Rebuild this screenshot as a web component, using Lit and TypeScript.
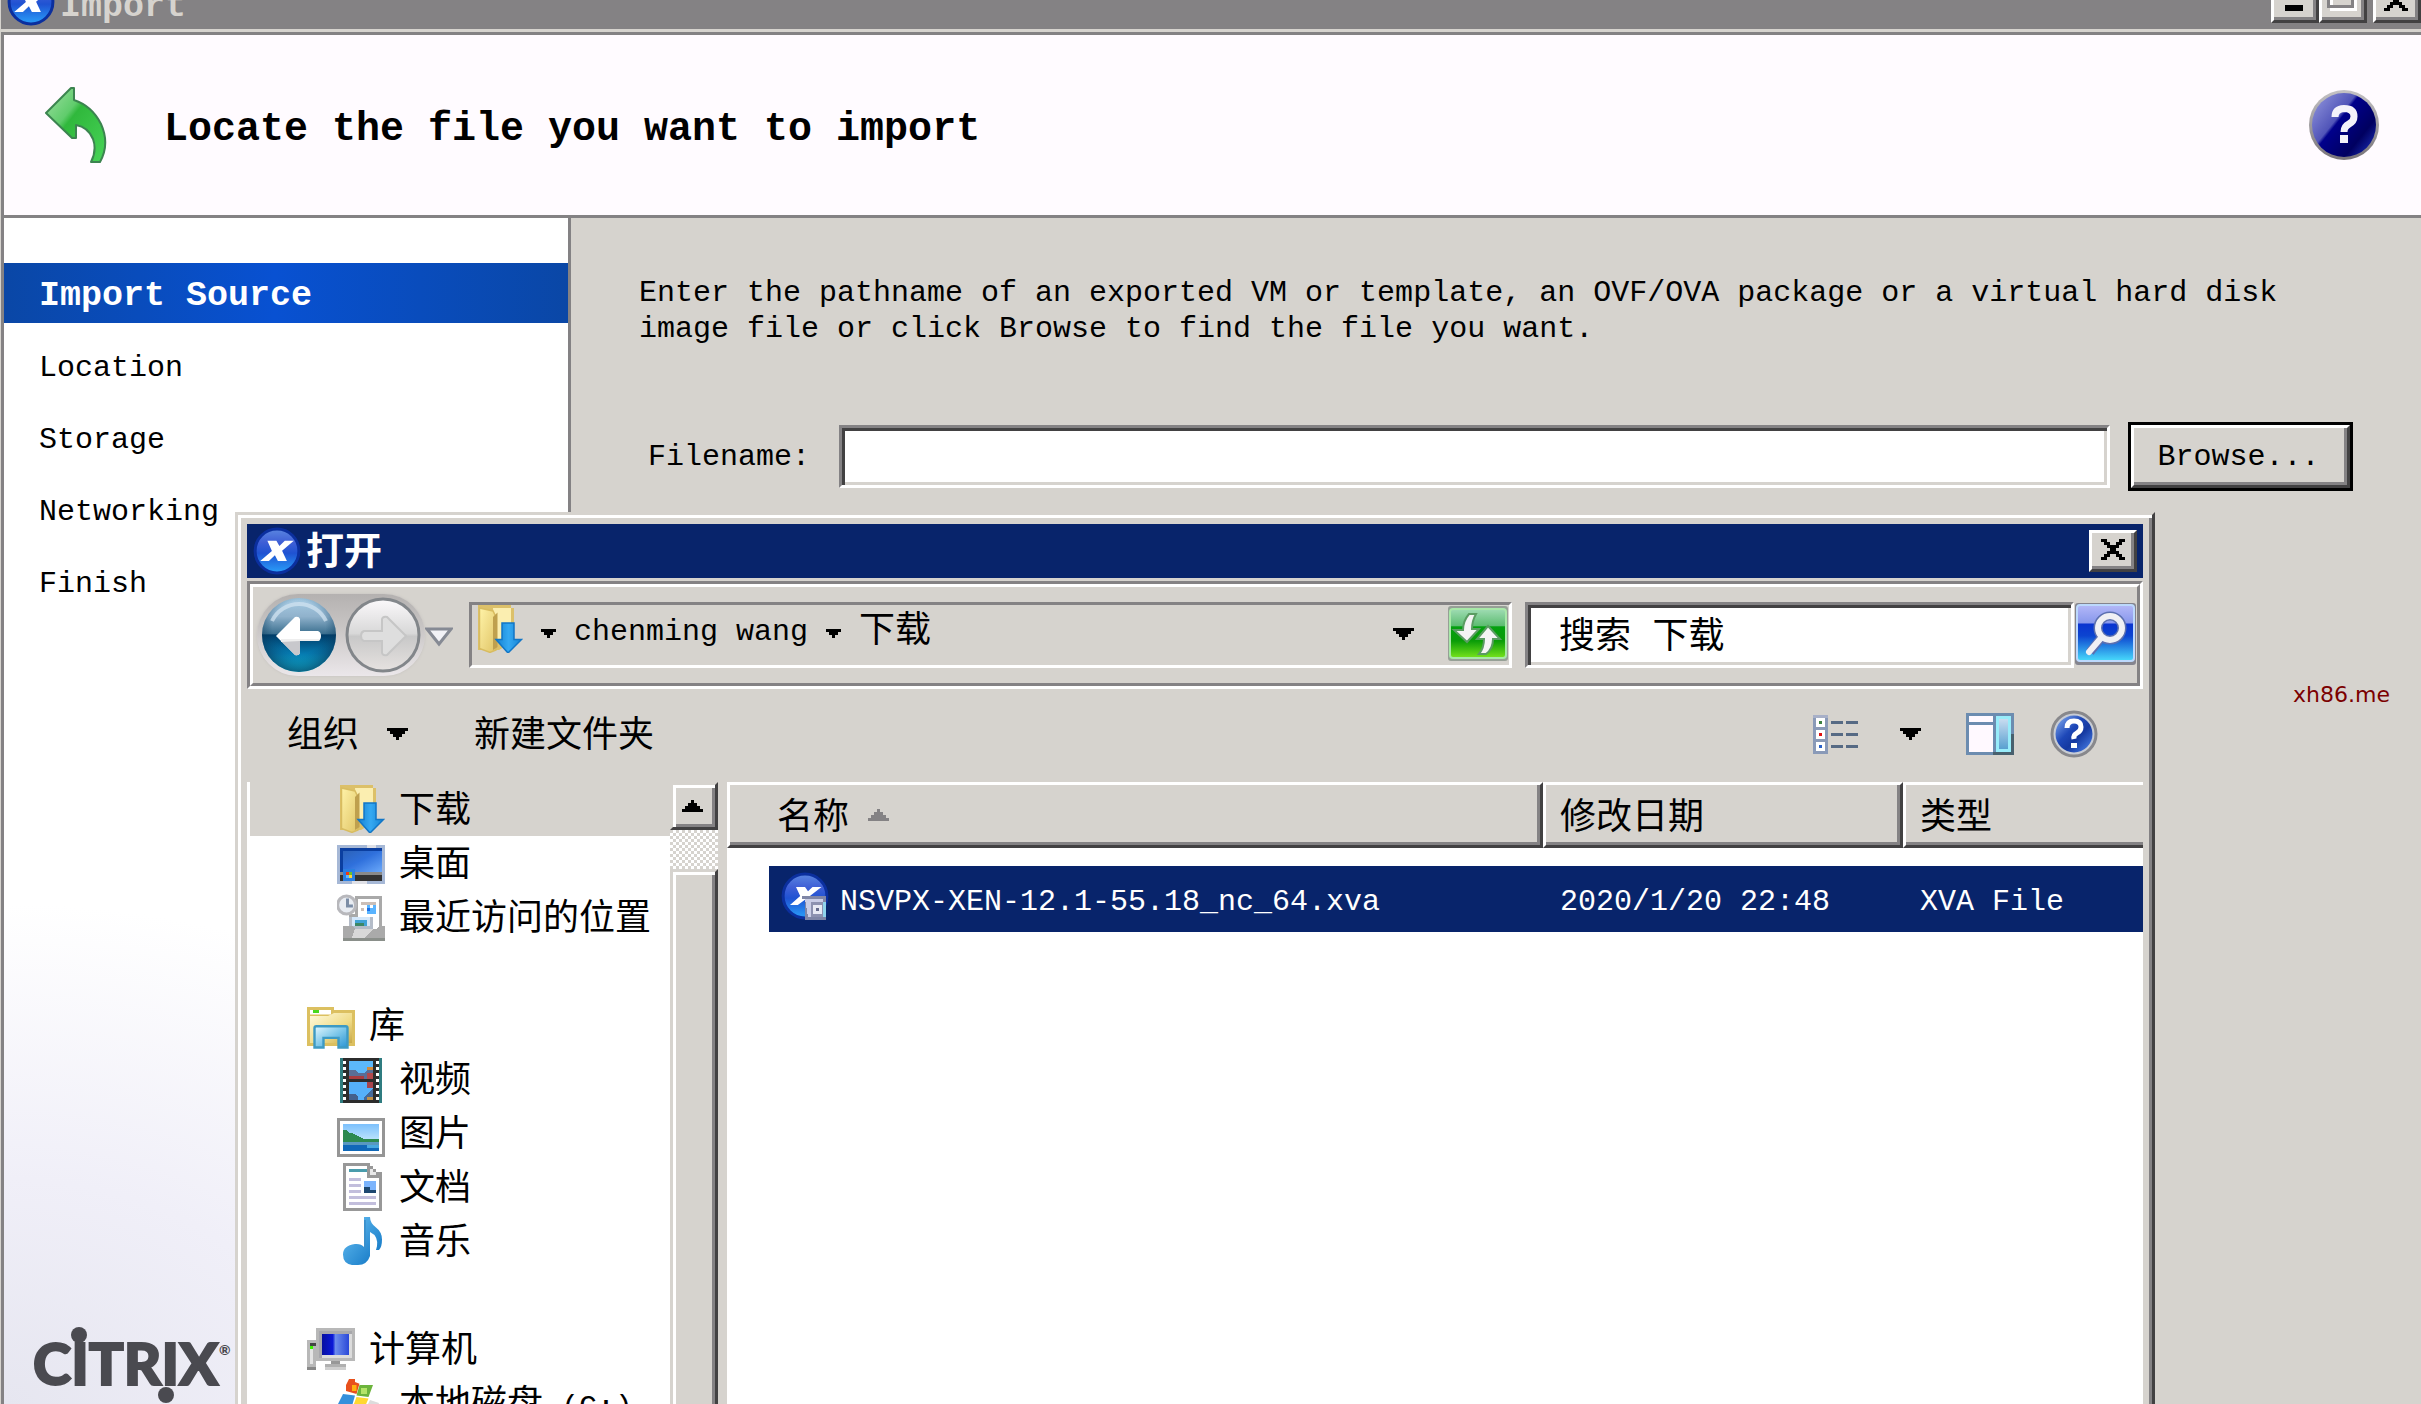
import { LitElement, html, css, svg } from "lit";
import { customElement, property } from "lit/decorators.js";

const icons: Record<string, unknown> = {
  app: svg`
    <defs><linearGradient id="a" x1="0" y1="0" x2="0" y2="1"><stop offset="0" stop-color="#5a86e0"/><stop offset=".3" stop-color="#3f5fd6"/><stop offset=".55" stop-color="#1f52d2"/><stop offset="1" stop-color="#2aa0fa"/></linearGradient></defs>
    <circle cx="8" cy="8" r="7.3" fill="url(#a)" stroke="#0b2f9e" stroke-width="1"/>
    <path d="M4.8 4.6h3l1 1.7 1.8-1.7h3L9.7 7.9l1.6 3.4h-3L7.3 9.4l-2 1.9H2.4L6.3 8z" fill="#fff"/>`,
  appfile: svg`
    <defs><linearGradient id="b" x1="0" y1="0" x2="0" y2="1"><stop offset="0" stop-color="#5a86e0"/><stop offset=".3" stop-color="#3f5fd6"/><stop offset=".55" stop-color="#1f52d2"/><stop offset="1" stop-color="#2aa0fa"/></linearGradient></defs>
    <circle cx="8" cy="8" r="7.3" fill="url(#b)" stroke="#0b2f9e" stroke-width="1"/>
    <path d="M5 5h3l1 1.4L10.500 5h3L9 8.500 5.600 11H3l3.400-3z" fill="#fff"/>
    <g shape-rendering="crispEdges"><path d="M7 8h8v8H8V9H7z" fill="#7f86a6"/><path d="M8 9h6v6H9z" fill="#c9cde6"/><path d="M10 10h4v5h-4z" fill="#8d92b0"/><path d="M10.500 11h3v3h-3z" fill="#e8eaf4"/><path d="M11.500 12h1v1h-1z" fill="#666c8c"/><path d="M14 10h1v5h-1z" fill="#8fd4ec"/></g>`,
  downloads: svg`
    <defs><linearGradient id="c" x1="0" y1="0" x2="1" y2="1"><stop offset="0" stop-color="#fff3a8"/><stop offset="1" stop-color="#e0c466"/></linearGradient><linearGradient id="d" x1="0" y1="0" x2="1" y2="0"><stop offset="0" stop-color="#1582d2"/><stop offset=".5" stop-color="#35a9f2"/><stop offset="1" stop-color="#1582d2"/></linearGradient></defs>
    <path d="M1 0h11v1h1v11l-5 3H1z" fill="#dcc069"/><path d="M6 1h6v11H7z" fill="#fbeeb0"/>
    <path d="M1.500 1L6 2l1 2v11l-2 .8L1.500 14.500z" fill="url(#c)" stroke="#d8bc60" stroke-width=".5"/><path d="M6 4l1.500-1.500V14L6 15z" fill="#bfa04e"/>
    <path d="M9 6h4v5.500h2.500L11 16l-4-4.500h2z" fill="url(#d)" stroke="#1276c6" stroke-width=".5"/>`,
  desktop: svg`
    <defs><linearGradient id="e" x1="0" y1="0" x2="1" y2="1"><stop offset="0" stop-color="#2c62b8"/><stop offset=".45" stop-color="#2f70dc"/><stop offset="1" stop-color="#6aa8fa"/></linearGradient></defs>
    <g shape-rendering="crispEdges"><path d="M0 2h16v13H0z" fill="#a6b8d6"/><path d="M10 2h3v1h-3zM5 14h5v1H5z" fill="#dfe0e6"/><path d="M1 3h14v9H1z" fill="#0b3fa0"/><path d="M2 4h13v7H2z" fill="url(#e)"/><path d="M1 11h14v1H1z" fill="#8a8a8a"/><path d="M1 12h14v2H1z" fill="#333"/><path d="M2 10h4v4H2z" fill="#2b7fe0"/><path d="M3 11h1v1H3z" fill="#f23a12"/><path d="M4 11h1v1H4z" fill="#6cc22a"/><path d="M3 12h1v1H3z" fill="#5ab8ff"/><path d="M4 12h1v1H4z" fill="#ffd83a"/></g>`,
  recent: svg`
    <g shape-rendering="crispEdges"><path d="M6 1h9v11H4V7h2z" fill="#a9a9a9"/><path d="M7 2h7v10H5V8h2z" fill="#fff"/><path d="M8 3h5v1H8z" fill="#cbbfb8"/><path d="M10 4h3v3h-3z" fill="#5ab4ff"/><path d="M11 4h1v1h-1z" fill="#fff"/><path d="M10 5h1v1h-1z" fill="#1a6fe8"/><path d="M8 5h1v1H8z" fill="#cbbfb8"/><path d="M4 8h8v4H4z" fill="#b4bcc8"/><path d="M5 8h6v3H5z" fill="#d3e7fa"/><path d="M6 9h4v2H6z" fill="#3fa2d6"/><path d="M6 10h3v1H6z" fill="#3c8766"/><path d="M2 11h3l1 1h7l1-1h2v5H2z" fill="#aaa"/><path d="M6 12h6l-3 3H5z" fill="#d8d8d8"/><path d="M2 15h14v1H2z" fill="#8a8f8a"/></g>
    <circle cx="3.200" cy="4" r="3" fill="#e8ecf2" stroke="#b8b8bc"/><path d="M3.500 1.800V4.300h1.800" fill="none" stroke="#7b8da6"/>`,
  library: svg`
    <defs><linearGradient id="f" x1="0" y1="0" x2="1" y2="1"><stop offset="0" stop-color="#fffbe0"/><stop offset=".6" stop-color="#f0dc88"/><stop offset="1" stop-color="#c8a848"/></linearGradient><linearGradient id="g" x1="0" y1="0" x2="1" y2="1"><stop offset="0" stop-color="#e4f8ff"/><stop offset=".5" stop-color="#7fc8ea"/><stop offset="1" stop-color="#2a94d4"/></linearGradient></defs>
    <path d="M0 2h9v1h7v12H0z" fill="#dcc060"/><path d="M1 3h7v1.500H1z" fill="#fff"/><path d="M2 3h2v1H2z" fill="#4ad820"/><path d="M1 5h6l2-1h6v10H1z" fill="url(#f)"/>
    <path d="M2.500 9q0-.6.600-.6h9.800q.6 0 .6.600v6.500H10.500v-3.200H5.500v3.200h-3z" fill="url(#g)" stroke="#3d9ac4" stroke-width=".8"/>`,
  video: svg`
    <g shape-rendering="crispEdges"><path d="M1 1h14v15H1z" fill="#2f7c80"/><path d="M2 1h12v15H2z" fill="#2c2c2c"/><path d="M4 2h8v6H4z" fill="#5cb8fa"/><path d="M4 9h8v6H4z" fill="#55b0fa"/><path d="M4 5h2l1 1h2l2-2h1v4H4z" fill="#5a6e96"/><path d="M4 7h5v1H4z" fill="#a83c40"/><path d="M10 4h2v1h-2z" fill="#d08a3c"/><path d="M10 6h2v2h-2z" fill="#b2484c"/><path d="M10 9h2v2h-2z" fill="#a8444c"/><path d="M4 13h2l1 1v1H4z" fill="#44618c"/><path d="M9 14l3-3v4H9z" fill="#456a9a"/><path d="M10 14h2v1h-2z" fill="#c09048"/>
    <path d="M2 2h1v1H2zM2 4h1v1H2zM2 6h1v1H2zM2 8h1v1H2zM2 10h1v1H2zM2 12h1v1H2zM2 14h1v1H2zM13 2h1v1h-1zM13 4h1v1h-1zM13 6h1v1h-1zM13 8h1v1h-1zM13 10h1v1h-1zM13 12h1v1h-1zM13 14h1v1h-1z" fill="#fff"/></g>`,
  picture: svg`
    <defs><linearGradient id="h" x1="0" y1="0" x2="0" y2="1"><stop offset="0" stop-color="#7cc0fc"/><stop offset="1" stop-color="#e8fcfc"/></linearGradient></defs>
    <g shape-rendering="crispEdges"><path d="M0 3h16v13H0z" fill="#959595"/><path d="M1 4h14v11H1z" fill="#fff"/><path d="M2 5h12v9H2z" fill="url(#h)"/><path d="M2 7h1l1 1h1l2 1 2 1h5v1H2z" fill="#2c8a50"/><path d="M2 11h12v1H2z" fill="#5898c0"/><path d="M2 12h12v2H2z" fill="#1068b8"/><path d="M10 12h4v1h-4z" fill="#48a8e0"/></g>`,
  document: svg`
    <g shape-rendering="crispEdges"><path d="M2 0h9v1h1v1h1v1h2v13H2z" fill="#989898"/><path d="M3 1h7v4h4v10H3z" fill="#fff"/><path d="M11 2h1v1h1v1h-2z" fill="#e8e8e8"/><path d="M4 2h6v1H4z" fill="#4a9cac"/><path d="M4 5h4v1H4zM4 7h4v1H4zM4 9h4v1H4zM4 11h9v1H4zM4 13h9v1H4z" fill="#c2bedc"/><path d="M9 6h4v4H9z" fill="#7cb4fc"/><path d="M9 8h2v1h2v1H9z" fill="#1e4870"/></g>`,
  music: svg`
    <defs><linearGradient id="i" x1="0" y1="0" x2="1" y2="1"><stop offset="0" stop-color="#6cc4f6"/><stop offset="1" stop-color="#0a70c0"/></linearGradient></defs>
    <path d="M9 0h2q0 2 2 3.500t2 4-1 3.500h-1q1-3-.5-5L11 5v8q-1 3-4 3H5q-3-.5-3-3.500T6 9q2-.2 3 1z" fill="url(#i)"/><path d="M9.300 1v9.500" stroke="#3a90cc" stroke-width=".6"/>`,
  computer: svg`
    <defs><linearGradient id="j" x1="0" y1="0" x2="1" y2="0"><stop offset="0" stop-color="#0810a0"/><stop offset=".4" stop-color="#0a18d8"/><stop offset=".5" stop-color="#6c8cec"/><stop offset="1" stop-color="#2a48d8"/></linearGradient></defs>
    <g shape-rendering="crispEdges"><path d="M3 1h13v11H3z" fill="#b8b8b8"/><path d="M4 2h11v9H4z" fill="#dcdcdc"/><path d="M4 2h11v1H5v8H4z" fill="#a8a8ac"/><path d="M5 3h9v7H5z" fill="url(#j)"/><path d="M8 12h3v1H8z" fill="#989898"/><path d="M6 13h7v1H6z" fill="#b0b0b0"/><path d="M6 14h7v1H6z" fill="#cfcfcf"/><path d="M0 5h3v10H0z" fill="#b8b8b8"/><path d="M1 8h1v5H1z" fill="#e4e4e4"/><path d="M1 6h2v1H1z" fill="#444"/><path d="M1 7h1v1H1z" fill="#3df000"/><path d="M0 14h3v1H0z" fill="#888"/></g>`,
  disk: svg`
    <path d="M3 2l1-2h2v1l1.500.6L6.500 5 3 4z" fill="#e8501c"/><path d="M5 2h1.500v2H5z" fill="#ffb010"/><path d="M7.500 2H12l-1.500 4-4-.5z" fill="#6cb43c"/><path d="M8 3h2v2H8z" fill="#b4e468"/><path d="M2 5l4 .5L5 9H0z" fill="#3490dc"/><path d="M6.500 6l4 .5L9 10H5z" fill="#ffd830"/><path d="M11 7l3 1-1 3H9z" fill="#dcdcdc"/>`,
};

@customElement("pixel-icon")
export class PixelIcon extends LitElement {
  static styles = css`
    :host { display: block; flex: none; width: 48px; height: 48px; }
    svg { display: block; width: 100%; height: 100%; }
  `;
  @property() name = "app";
  render() {
    return html`<svg viewBox="0 0 16 16" aria-hidden="true">${icons[this.name]}</svg>`;
  }
}

interface Place { label: string; latin?: string; icon: string; level: number; selected?: boolean; gap?: boolean; }

const places: Place[] = [
  { label: "下载", icon: "downloads", level: 2, selected: true },
  { label: "桌面", icon: "desktop", level: 2 },
  { label: "最近访问的位置", icon: "recent", level: 2 },
  { label: "库", icon: "library", level: 1, gap: true },
  { label: "视频", icon: "video", level: 2 },
  { label: "图片", icon: "picture", level: 2 },
  { label: "文档", icon: "document", level: 2 },
  { label: "音乐", icon: "music", level: 2 },
  { label: "计算机", icon: "computer", level: 1, gap: true },
  { label: "本地磁盘", latin: " (C:)", icon: "disk", level: 2 },
];

const base = css`
  * { box-sizing: border-box; }
  button, input { font: inherit; color: inherit; margin: 0; padding: 0; border: 0; border-radius: 0; background: none; outline: 0; appearance: none; }
  button svg { display: block; }
  .sunken { border: 3px solid; border-color: #848284 #fff #fff #848284; background: #fff; box-shadow: inset 3px 3px #424142, inset -3px -3px #d6d3ce; }
  .raised { border: 3px solid; border-color: #fff #424142 #424142 #fff; background: #d6d3ce; box-shadow: inset -3px -3px #848284; }
  .tri { display: block; flex: none; fill: #000; }
`;

const down5 = html`<svg class="tri" width="15" height="9" viewBox="0 0 5 3" shape-rendering="crispEdges" aria-hidden="true"><path d="M0 0h5v1H4v1H3v1H2V2H1V1H0z"/></svg>`;
const down7 = html`<svg class="tri" width="21" height="12" viewBox="0 0 7 4" shape-rendering="crispEdges" aria-hidden="true"><path d="M0 0h7v1H6v1H5v1H4v1H3V3H2V2H1V1H0z"/></svg>`;
const up7 = html`<svg class="tri" width="21" height="12" viewBox="0 0 7 4" shape-rendering="crispEdges" aria-hidden="true"><path d="M3 0h1v1h1v1h1v1h1v1H0V3h1V2h1V1h1z"/></svg>`;
const cross = html`<svg width="24" height="21" viewBox="0 0 8 7" shape-rendering="crispEdges" aria-hidden="true"><path d="M0 0h2v1h1v1h2V1h1V0h2v1H7v1H6v1H5v1h1v1h1v1h1v1H6V6H5V5H3v1H2v1H0V6h1V5h1V4h1V3H2V2H1V1H0z"/></svg>`;

@customElement("open-dialog")
export class OpenDialog extends LitElement {
  static styles = [base, css`
    :host { display: flex; flex-direction: column; background: #d6d3ce; border: 3px solid; border-bottom: 0; border-color: #d6d3ce #424142 #424142 #d6d3ce; box-shadow: inset 3px 3px #fff, inset -3px 0 #848284; padding: 9px 9px 0; font-family: "Liberation Mono", "Noto Sans CJK SC", monospace; font-size: 30px; line-height: 36px; color: #000; overflow: hidden; }
    .cjk { font-size: 36px; line-height: 54px; }
    .low { display: block; padding-top: 8px; }
    .title { display: flex; align-items: center; gap: 5px; height: 54px; flex: none; background: #08246b; color: #fff; padding: 0 6px; }
    .title h2 { flex: 1; margin: 0; padding-top: 6px; font-size: 38px; line-height: 54px; font-weight: 700; }
    .close { display: grid; place-items: start center; width: 48px; height: 42px; padding-top: 6px; }
    .frame { flex: none; margin-top: 3px; border: 3px solid; border-color: #848284 #fff #fff #848284; }
    .bar { display: flex; align-items: center; height: 102px; border: 3px solid; border-color: #fff #848284 #848284 #fff; padding-left: 4px; }
    .travel { display: flex; gap: 8px; padding: 3px 4px; border-radius: 41px; background: linear-gradient(#b4b1b0, #c8c5c4 40%, #ebe7ea); box-shadow: 0 0 3px #c4c1be; }
    .travel button, .travel svg { display: block; width: 76px; height: 76px; }
    .history { width: 28px; margin: 4px 16px 0 0; }
    .address { display: flex; flex: 1; align-items: flex-start; height: 66px; border: 3px solid; border-color: #848284 #fff #fff #848284; padding-left: 3px; }
    .crumbs { display: flex; flex: 1; align-items: center; height: 48px; gap: 18px; }
    .crumbs .tri { margin-top: 9px; }
    .crumbs .latin { padding-top: 6px; }
    .crumbs .drop { margin-left: auto; margin-right: 33px; }
    .search { width: 549px; height: 66px; margin-left: 13px; padding: 0 9px 5px 31px; font-size: 36px; }
    .go { margin: 0 1px 3px; }
    .tools { display: flex; align-items: center; flex: none; height: 93px; padding: 0 45px 3px 40px; }
    .organize { display: flex; align-items: center; gap: 28px; margin-right: 66px; }
    .right { display: flex; align-items: center; margin-left: auto; }
    .right .tri { margin: 0 45px 0 42px; }
    .right .help { margin-left: 36px; }
    .content { display: flex; flex: 1; min-height: 0; }
    .tree { width: 423px; background: #fff; padding-left: 3px; overflow: hidden; }
    .tree ul { list-style: none; margin: 0; padding: 0; }
    .tree li { display: flex; align-items: center; gap: 14px; height: 54px; white-space: pre; }
    .tree .l1 { padding-left: 57px; }
    .tree .l2 { padding-left: 87px; }
    .tree .gap { margin-top: 54px; }
    .tree .selected { background: #d6d3ce; }
    .latin { font-size: 30px; }
    .scroll { display: flex; flex-direction: column; width: 48px; margin-right: 9px; background: conic-gradient(#fff 25%, #d6d3ce 0 50%, #fff 0 75%, #d6d3ce 0) 0 0 / 6px 6px; }
    .scroll button, .thumb { background: #d6d3ce; border: 3px solid; border-color: #d6d3ce #424142 #424142 #d6d3ce; box-shadow: inset 3px 3px #fff, inset -3px -3px #848284; }
    .scroll button { display: grid; place-items: center; height: 48px; padding-right: 3px; }
    .thumb { flex: 1; margin-top: 39px; border-bottom: 0; box-shadow: inset 3px 3px #fff, inset -3px 0 #848284; }
    .files { flex: 1; background: #fff; overflow: hidden; }
    table { width: 100%; border-collapse: separate; border-spacing: 0; table-layout: fixed; }
    .c1 { width: 816px; }
    .c2 { width: 360px; }
    th { height: 66px; padding: 0 0 0 14px; text-align: left; font-weight: 400; background: #d6d3ce; border: 3px solid; border-color: #fff #424142 #424142 #fff; box-shadow: inset -3px -3px #848284; }
    th .low { height: 60px; }
    th:first-child { padding-left: 47px; }
    th:last-child { border-right: 0; box-shadow: inset 0 -3px #848284; }
    .sort { display: flex; align-items: center; gap: 19px; height: 60px; }
    .sort .tri { fill: #848284; }
    td { padding: 18px 0 0; color: #fff; }
    td:first-child { padding-left: 42px; }
    .cell { display: flex; align-items: center; height: 66px; background: #08246b; padding: 5px 0 0 17px; white-space: nowrap; }
    .name { padding: 0 0 0 12px; gap: 11px; }
    .name pixel-icon { margin-bottom: 6px; }
    .name .label { padding-top: 5px; }
  `];

  render() {
    return html`
      <header class="title">
        <pixel-icon name="app"></pixel-icon>
        <h2>打开</h2>
        <button class="close raised" aria-label="关闭">${cross}</button>
      </header>
      <div class="frame"><div class="bar">
        <div class="travel">
          <button aria-label="后退">
            <svg viewBox="0 0 76 76" aria-hidden="true">
              <defs>
                <linearGradient id="k" x1="0" y1="0" x2="0" y2="1"><stop offset="0" stop-color="#a8cce4"/><stop offset=".25" stop-color="#90b2cc"/><stop offset=".48" stop-color="#3c7090"/><stop offset=".5" stop-color="#003c68"/><stop offset=".75" stop-color="#067ab0"/><stop offset="1" stop-color="#10d8f8"/></linearGradient>
                <radialGradient id="k2" cx=".5" cy=".4" r=".6"><stop offset=".6" stop-color="#0a4468" stop-opacity="0"/><stop offset="1" stop-color="#0a3050" stop-opacity=".7"/></radialGradient>
              </defs>
              <circle cx="38" cy="38" r="37" fill="url(#k)"/><circle cx="38" cy="38" r="37" fill="url(#k2)"/>
              <path d="M11 24a30 30 0 0 1 54 0" fill="none" stroke="#d4e6f2" stroke-width="4" opacity=".7"/>
              <path d="M15 39L34 20q4-1 5 2v12h18q3 1 3 5t-3 5H39v12q-1 3-5 2z" fill="#fff"/><path d="M20 44l14 14q4 1 5-2V44z" fill="#c8c8cc"/><path d="M20 42h39v1q-1 1-2 1H39l-19 1z" fill="#eee"/>
            </svg>
          </button>
          <button aria-label="前进" disabled>
            <svg viewBox="0 0 76 76" aria-hidden="true">
              <defs><linearGradient id="m" x1="0" y1="0" x2="0" y2="1"><stop offset="0" stop-color="#fbf9fb"/><stop offset=".48" stop-color="#d8d8d8"/><stop offset=".52" stop-color="#c8c8c8"/><stop offset="1" stop-color="#e6e2e0"/></linearGradient></defs>
              <circle cx="38" cy="38" r="36" fill="url(#m)" stroke="#82868a" stroke-width="3"/>
              <path d="M61 39L42 20q-4-1-5 2v12H19q-3 1-3 5t3 5h18v12q1 3 5 2z" fill="#dedede" stroke="#c6c6c6" stroke-width="2"/>
            </svg>
          </button>
        </div>
        <button class="history" aria-label="最近的页面"><svg width="28" height="20" viewBox="0 0 28 20" aria-hidden="true"><path d="M2 2h24L14 17z" fill="#f2f2f6" stroke="#868a94" stroke-width="3"/></svg></button>
        <div class="address">
          <nav class="crumbs" aria-label="地址">
            <pixel-icon name="downloads"></pixel-icon>
            ${down5}<span class="latin">chenming wang</span>
            ${down5}<span class="cjk low">下载</span>
            <span class="drop">${down7}</span>
          </nav>
          <button aria-label="刷新">
            <svg width="62" height="57" viewBox="0 0 62 57" aria-hidden="true">
              <defs><linearGradient id="n" x1="0" y1="0" x2="0" y2="1"><stop offset="0" stop-color="#a0dcb4"/><stop offset=".35" stop-color="#5cbc70"/><stop offset=".36" stop-color="#04a010"/><stop offset=".65" stop-color="#0a9c08"/><stop offset="1" stop-color="#78e41c"/></linearGradient></defs>
              <rect x="1" y="1" width="60" height="55" rx="3" fill="#96a096"/><rect x="3" y="4" width="56" height="49" rx="3" fill="url(#n)" stroke="#a8e8a8" stroke-width="2"/>
              <g fill="#f4f4f4" stroke="#5a9c62" stroke-width="2"><path d="M22 9h7q-4 7-4 15h7L20 37 7 25h9q0-9 6-16z"/><path d="M41 21l12 13h-7q0 10-7 15h-7q5-6 5-15h-7z"/></g>
            </svg>
          </button>
        </div>
        <input class="search sunken" type="text" aria-label="搜索" .value=${"搜索 下载"} />
        <button class="go" aria-label="开始搜索">
          <svg width="61" height="63" viewBox="0 0 61 63" aria-hidden="true">
            <defs><linearGradient id="o" x1="0" y1="0" x2="0" y2="1"><stop offset="0" stop-color="#b4b8f8"/><stop offset=".32" stop-color="#8898ec"/><stop offset=".34" stop-color="#0a34d0"/><stop offset=".55" stop-color="#0c44d0"/><stop offset="1" stop-color="#48dcfc"/></linearGradient></defs>
            <rect x="0" y="1" width="61" height="62" rx="3" fill="#84848e"/><rect x="2" y="3" width="57" height="56" rx="3" fill="url(#o)" stroke="#bcd8fc" stroke-width="2"/>
            <g fill="none" stroke="#5c70b0" stroke-width="9"><circle cx="35" cy="26" r="12"/><path d="M26 36L15 50"/></g>
            <g fill="none" stroke="#f0f0f4" stroke-width="6"><circle cx="35" cy="26" r="12"/><path d="M26 36L14 50" stroke-linecap="round"/></g>
          </svg>
        </button>
      </div></div>
      <div class="tools">
        <button class="organize cjk"><span class="low">组织</span>${down7}</button>
        <button class="cjk"><span class="low">新建文件夹</span></button>
        <div class="right">
          <button aria-label="视图">
            <svg width="45" height="39" viewBox="0 0 15 13" shape-rendering="crispEdges" aria-hidden="true"><path d="M0 0h5v13H0z" fill="#8a9ab8"/><path d="M0 0h5v1H0z" fill="#a8b0c8"/><path d="M1 1h3v3H1zM1 5h3v3H1zM1 9h3v3H1z" fill="#fff"/><path d="M2 2h1v1H2z" fill="#3c8040"/><path d="M2 6h1v1H2z" fill="#e01010"/><path d="M2 10h1v1H2z" fill="#2860c8"/><path d="M6 2h4v1H6zM11 2h4v1h-4zM6 6h4v1H6zM11 6h4v1h-4zM6 10h4v1H6zM11 10h4v1h-4z" fill="#566a84"/></svg>
          </button>
          ${down7}
          <button aria-label="预览窗格">
            <svg width="48" height="42" viewBox="0 0 16 14" shape-rendering="crispEdges" aria-hidden="true"><defs><linearGradient id="p" x1="0" y1="0" x2="0" y2="1"><stop offset="0" stop-color="#c8dcf0"/><stop offset="1" stop-color="#58a0d0"/></linearGradient></defs><path d="M0 0h16v14H0z" fill="#6c8cb0"/><path d="M9 13h7v1H9zM15 7h1v7h-1z" fill="#48606e"/><path d="M1 1h8v2H1zM1 4h8v9H1z" fill="#fff9ff"/><path d="M10 1h5v12h-5z" fill="#98ecfa"/><path d="M11 2h3v10h-3z" fill="url(#p)"/></svg>
          </button>
          <button class="help" aria-label="帮助">
            <svg width="48" height="48" viewBox="0 0 48 48" aria-hidden="true">
              <defs><linearGradient id="q" x1="0" y1="0" x2="1" y2="1"><stop offset="0" stop-color="#8cb4f4"/><stop offset=".4" stop-color="#1e48b8"/><stop offset=".6" stop-color="#1438a0"/><stop offset="1" stop-color="#5088f0"/></linearGradient></defs>
              <circle cx="24" cy="24" r="22" fill="#c8ccd4" stroke="#88888c" stroke-width="3"/><circle cx="24" cy="24" r="18.500" fill="url(#q)"/>
              <path d="M17 18q0-7 7-7t7 6q0 4-4 6t-3 6" fill="none" stroke="#fff" stroke-width="5"/><path d="M21 33h6v5h-6z" fill="#fff"/>
            </svg>
          </button>
        </div>
      </div>
      <div class="content">
        <nav class="tree cjk"><ul>
          ${places.map((p) => html`<li class="l${p.level} ${p.selected ? "selected" : ""} ${p.gap ? "gap" : ""}"><pixel-icon name=${p.icon}></pixel-icon><span class="low">${p.label}${p.latin ? html`<span class="latin">${p.latin}</span>` : ""}</span></li>`)}
        </ul></nav>
        <div class="scroll"><button aria-label="向上滚动">${up7}</button><div class="thumb"></div></div>
        <div class="files">
          <table>
            <colgroup><col class="c1" /><col class="c2" /><col /></colgroup>
            <thead class="cjk"><tr><th><div class="sort"><span class="low">名称</span>${up7}</div></th><th><span class="low">修改日期</span></th><th><span class="low">类型</span></th></tr></thead>
            <tbody><tr>
              <td><div class="cell name"><pixel-icon name="appfile"></pixel-icon><span class="label">NSVPX-XEN-12.1-55.18_nc_64.xva</span></div></td>
              <td><div class="cell">2020/1/20 22:48</div></td>
              <td><div class="cell">XVA File</div></td>
            </tr></tbody>
          </table>
        </div>
      </div>`;
  }
}

@customElement("app-root")
export class AppRoot extends LitElement {
  static styles = [base, css`
    :host { display: flex; flex-direction: column; position: relative; height: 100vh; overflow: hidden; background: #d6d3ce; font-family: "Liberation Mono", "Noto Sans CJK SC", monospace; font-size: 30px; line-height: 36px; color: #000; }
    .titlebar { display: flex; align-items: flex-end; flex: none; height: 29px; margin-left: 1px; padding-left: 6px; background: #848284; color: #d6d3ce; overflow: hidden; }
    .titlebar pixel-icon { margin: 0 5px 3px 0; }
    .titlebar h1 { flex: 1; margin: 0 0 4px; font-size: 35px; line-height: 36px; font-weight: 700; }
    .controls { display: flex; flex: none; margin: 0 0 6px; }
    .controls button { display: grid; place-items: end center; width: 48px; height: 42px; padding: 0 3px 9px 0; }
    .controls .x { margin-left: 6px; }
    .window { display: flex; flex-direction: column; flex: 1; min-height: 0; margin: 3px 0 0 1px; border: solid #848284; border-width: 3px 0 0 3px; }
    .banner { display: flex; align-items: center; flex: none; height: 183px; padding: 0 41px 0 38px; background: #fffbff; border-bottom: 3px solid #848284; }
    .banner h2 { flex: 1; margin: 0 0 0 56px; padding-top: 10px; font-size: 40px; line-height: 48px; font-weight: 700; }
    .main { display: flex; flex: 1; min-height: 0; }
    .side { display: flex; flex-direction: column; justify-content: space-between; width: 567px; padding-top: 45px; border-right: 3px solid #848284; background: radial-gradient(ellipse 700px 500px at 0 100%, #e6e6f0, #f0eff8 45%, #fff); }
    .steps { list-style: none; margin: 0; padding: 0; }
    .steps a { display: flex; align-items: center; height: 72px; padding: 6px 0 0 35px; color: inherit; text-decoration: none; }
    .steps .current { height: 60px; margin-bottom: 6px; background: linear-gradient(90deg, #0a47a6, #0851d2 48%, #0a47a6); color: #fff; font-size: 35px; font-weight: 700; }
    .brand { display: block; margin-left: 28px; fill: #4a4a50; font-family: Lato, sans-serif; font-weight: 900; }
    .brand .word { stroke: #4a4a50; stroke-width: 2px; }
    .page { flex: 1; padding: 57px 68px 0 68px; }
    .page p { margin: 0; }
    .field { display: flex; align-items: center; margin-top: 75px; padding-left: 9px; }
    .field label { width: 191px; }
    .field input { flex: 1; min-width: 0; height: 63px; padding: 0 9px; }
    .browse { margin-left: 18px; border: 3px solid #000; }
    .browse button { display: block; width: 219px; height: 63px; padding-right: 4px; }
    .page .mark { margin: 189px -37px 0 0; text-align: right; font: 22px/30px "DejaVu Sans", sans-serif; color: #7b0000; }
    open-dialog { position: absolute; left: 235px; right: 266px; top: 512px; bottom: 0; }
  `];

  render() {
    return html`
      <header class="titlebar">
        <pixel-icon name="app"></pixel-icon>
        <h1>Import</h1>
        <div class="controls">
          <button class="raised" aria-label="Minimize"><svg width="18" height="6" aria-hidden="true"><path d="M0 0h18v6H0z"/></svg></button>
          <button class="raised" aria-label="Maximize" disabled><svg width="30" height="27" viewBox="0 0 10 9" shape-rendering="crispEdges" aria-hidden="true"><path d="M1 1h9v8H1z" fill="#fff"/><path d="M0 0h9v8H0z" fill="#848284"/><path d="M1 2h7v5H1z" fill="#fff"/><path d="M2 3h6v4H2z" fill="#d6d3ce"/></svg></button>
          <button class="raised x" aria-label="Close">${cross}</button>
        </div>
      </header>
      <div class="window">
        <header class="banner">
          <svg class="back" width="66" height="78" viewBox="0 0 66 78" aria-hidden="true">
            <defs><linearGradient id="r" x1="0" y1="0" x2="1" y2="1"><stop offset="0" stop-color="#a0e0a4"/><stop offset=".35" stop-color="#60cc6c"/><stop offset=".42" stop-color="#30b83c"/><stop offset="1" stop-color="#48d458"/></linearGradient></defs>
            <path d="M29 2h3v12q18 6 27 24 9 20-1 38h-9q6-12 2-23-5-12-17-14v13h-4L4 27z" fill="url(#r)" stroke="#3c8450" stroke-width="2" stroke-linejoin="round"/>
          </svg>
          <h2>Locate the file you want to import</h2>
          <button class="q" aria-label="Help">
            <svg width="72" height="72" viewBox="0 0 72 72" aria-hidden="true">
              <defs><linearGradient id="s" x1="0" y1="0.100" x2="1" y2=".9"><stop offset="0" stop-color="#9094dc"/><stop offset=".38" stop-color="#5054b8"/><stop offset=".42" stop-color="#00008c"/><stop offset=".75" stop-color="#000060"/><stop offset="1" stop-color="#1c30b8"/></linearGradient><linearGradient id="t" x1="0" y1="0" x2="0" y2="1"><stop offset="0" stop-color="#c4c2c4"/><stop offset="1" stop-color="#787478"/></linearGradient></defs>
              <circle cx="36" cy="36" r="35" fill="url(#t)"/><circle cx="36" cy="36" r="32" fill="url(#s)"/>
              <path d="M27 28q0-8 9-8.500 10 0 10 8 0 5-5 7.500t-5 8" fill="none" stroke="#f4f2fa" stroke-width="7"/><path d="M32 46h8v8h-8z" fill="#f4f2fa"/>
            </svg>
          </button>
        </header>
        <div class="main">
          <aside class="side">
            <ul class="steps">
              <li><a class="current" href="#source">Import Source</a></li>
              <li><a href="#location">Location</a></li>
              <li><a href="#storage">Storage</a></li>
              <li><a href="#networking">Networking</a></li>
              <li><a href="#finish">Finish</a></li>
            </ul>
            <svg class="brand" width="204" height="78" viewBox="0 0 204 78" role="img" aria-label="Citrix">
              <text class="word" x="1" y="59" font-size="58">CITRIX</text>
              <circle cx="47" cy="9" r="8"/><circle cx="134" cy="69" r="8"/>
              <text x="187" y="29" font-size="14">®</text>
            </svg>
          </aside>
          <section class="page">
            <p>Enter the pathname of an exported VM or template, an OVF/OVA package or a virtual hard disk image file or click Browse to find the file you want.</p>
            <div class="field">
              <label for="file">Filename:</label>
              <input id="file" class="sunken" type="text" />
              <div class="browse"><button class="raised">Browse...</button></div>
            </div>
            <p class="mark">xh86.me</p>
          </section>
        </div>
      </div>
      <open-dialog role="dialog" aria-label="打开"></open-dialog>`;
  }
}
